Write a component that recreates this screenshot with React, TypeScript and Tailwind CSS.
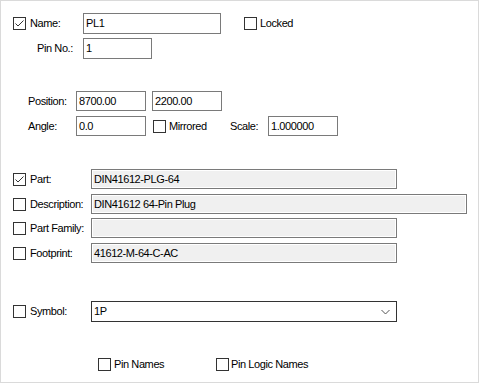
import React from 'react'

const FONT = "font-['Liberation_Sans',Arial,sans-serif] text-[11px] tracking-[-0.4px] text-black"

function Check({ checked = false }: { checked?: boolean }) {
  return (
    <span className="flex h-[13px] w-[13px] shrink-0 items-center justify-center border border-[#333] bg-white">
      {checked && (
        <svg width="11" height="11" viewBox="0 0 11 11">
          <path d="M1.5 5.5 L4 8 L9.5 2.5" fill="none" stroke="#333" strokeWidth="1" />
        </svg>
      )}
    </span>
  )
}

function CheckLabel({ checked, label, gap = 'gap-[4px]' }: { checked?: boolean; label: string; gap?: string }) {
  return (
    <span className={`flex items-center ${gap}`}>
      <Check checked={checked} />
      <span className="leading-none">{label}</span>
    </span>
  )
}

function Field({ value, w, h = 'h-[20px]', disabled = false }: { value: string; w: string; h?: string; disabled?: boolean }) {
  return (
    <div
      className={`${w} ${h} flex items-center border border-[#7a7a7a] px-[2px] ${
        disabled ? 'bg-[#f0f0f0] shadow-[inset_0_0_0_1px_#ffffff]' : 'bg-white'
      }`}
    >
      <span className="leading-none">{value}</span>
    </div>
  )
}

export default function App() {
  return (
    <div className={`box-border flex h-[383px] w-[479px] flex-col border border-[#dadada] bg-white ${FONT}`}>
      {/* Name / Locked */}
      <div className="mt-[12px] flex h-[21px] items-center pl-[12px]">
        <div className="w-[70px]">
          <CheckLabel checked label="Name:" />
        </div>
        <Field value="PL1" w="w-[138px]" h="h-[21px]" />
        <div className="ml-[23px]">
          <CheckLabel label="Locked" gap="gap-[3px]" />
        </div>
      </div>

      {/* Pin No. */}
      <div className="mt-[4px] flex h-[21px] items-center">
        <div className="w-[82px] pl-[36px]">Pin No.:</div>
        <Field value="1" w="w-[69px]" h="h-[21px]" />
      </div>

      {/* Position */}
      <div className="mt-[32px] flex h-[20px] items-center">
        <div className="w-[75px] pl-[27px]">Position:</div>
        <Field value="8700.00" w="w-[70px]" />
        <div className="ml-[6px]">
          <Field value="2200.00" w="w-[70px]" />
        </div>
      </div>

      {/* Angle / Mirrored / Scale */}
      <div className="mt-[5px] flex h-[20px] items-center">
        <div className="w-[75px] pl-[27px]">Angle:</div>
        <Field value="0.0" w="w-[70px]" />
        <div className="ml-[7px] w-[77px]">
          <CheckLabel label="Mirrored" gap="gap-[3px]" />
        </div>
        <div className="w-[38px]">Scale:</div>
        <Field value="1.000000" w="w-[70px]" />
      </div>

      {/* Part rows */}
      <div className="mt-[33px] flex h-[20px] items-center pl-[12px]">
        <div className="w-[78px]">
          <CheckLabel checked label="Part:" />
        </div>
        <Field value="DIN41612-PLG-64" w="w-[306px]" disabled />
      </div>
      <div className="mt-[5px] flex h-[20px] items-center pl-[12px]">
        <div className="w-[78px]">
          <CheckLabel label="Description:" />
        </div>
        <Field value="DIN41612 64-Pin Plug" w="w-[376px]" disabled />
      </div>
      <div className="mt-[4px] flex h-[20px] items-center pl-[12px]">
        <div className="w-[78px]">
          <CheckLabel label="Part Family:" />
        </div>
        <Field value="" w="w-[306px]" disabled />
      </div>
      <div className="mt-[5px] flex h-[20px] items-center pl-[12px]">
        <div className="w-[78px]">
          <CheckLabel label="Footprint:" />
        </div>
        <Field value="41612-M-64-C-AC" w="w-[306px]" disabled />
      </div>

      {/* Symbol */}
      <div className="mt-[38px] flex h-[21px] items-center pl-[12px]">
        <div className="w-[78px]">
          <CheckLabel label="Symbol:" />
        </div>
        <div className="flex h-[21px] w-[306px] items-center justify-between border border-[#333] bg-white pl-[2px] pr-[6px]">
          <span className="leading-none">1P</span>
          <svg width="9" height="6" viewBox="0 0 9 6">
            <path d="M0.5 1 L4.5 5 L8.5 1" fill="none" stroke="#555" strokeWidth="1" />
          </svg>
        </div>
      </div>

      {/* Pin names */}
      <div className="mt-[34px] flex h-[16px] items-center pl-[97px]">
        <div className="w-[118px]">
          <CheckLabel label="Pin Names" gap="gap-[3px]" />
        </div>
        <CheckLabel label="Pin Logic Names" gap="gap-[2px]" />
      </div>
    </div>
  )
}
